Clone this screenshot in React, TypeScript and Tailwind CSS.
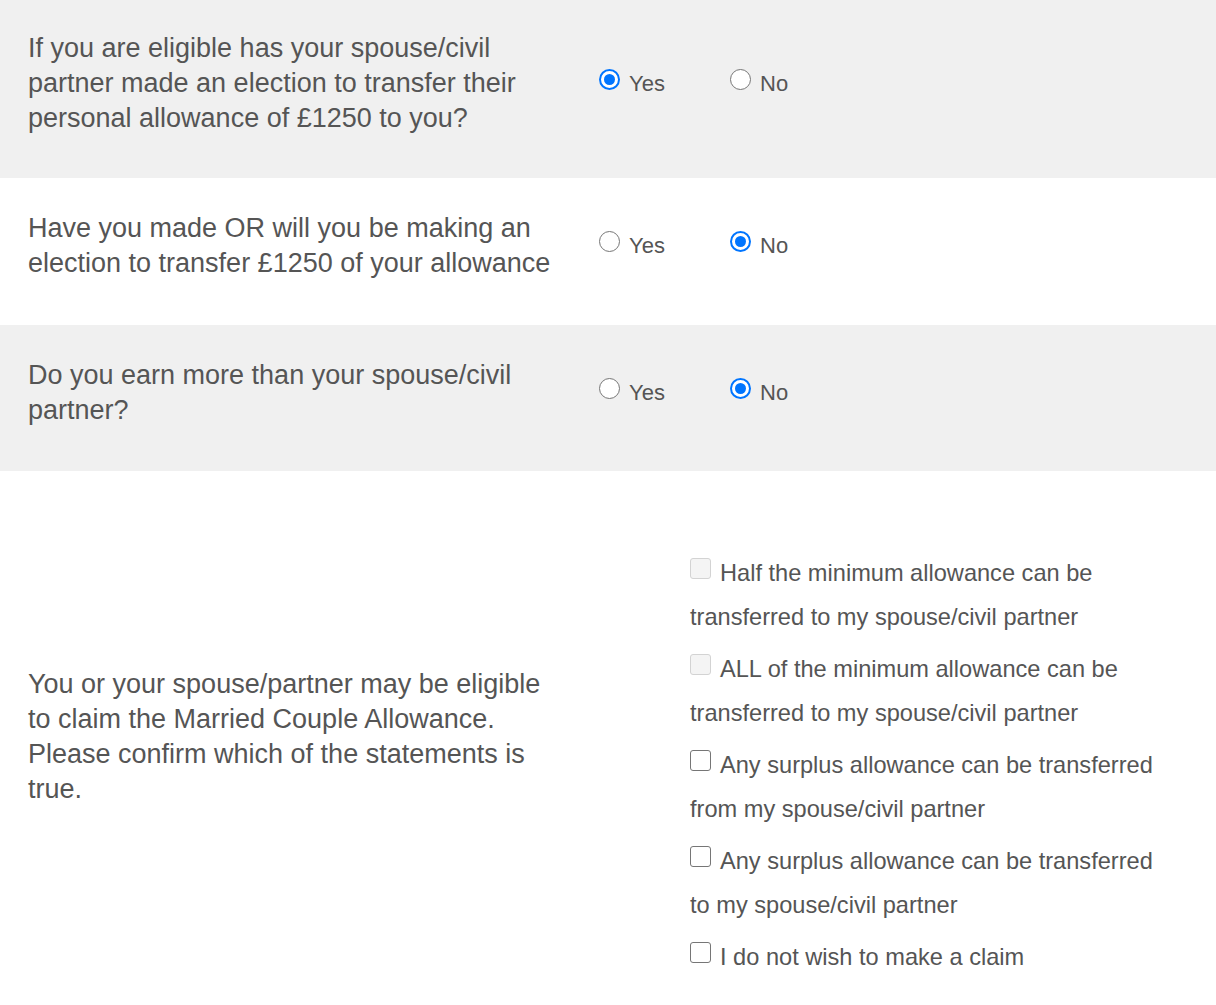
import React from "react";

type Question = {
  text: string;
  answer: "yes" | "no";
  bg: string;
  height: string;
};

const QUESTIONS: Question[] = [
  {
    text: "If you are eligible has your spouse/civil partner made an election to transfer their personal allowance of £1250 to you?",
    answer: "yes",
    bg: "bg-[#f0f0f0]",
    height: "h-[178px]",
  },
  {
    text: "Have you made OR will you be making an election to transfer £1250 of your allowance",
    answer: "no",
    bg: "bg-white",
    height: "h-[147px]",
  },
  {
    text: "Do you earn more than your spouse/civil partner?",
    answer: "no",
    bg: "bg-[#f0f0f0]",
    height: "h-[146px]",
  },
];

const STATEMENTS = [
  { label: "Half the minimum allowance can be transferred to my spouse/civil partner", disabled: true },
  { label: "ALL of the minimum allowance can be transferred to my spouse/civil partner", disabled: true },
  { label: "Any surplus allowance can be transferred from my spouse/civil partner", disabled: false },
  { label: "Any surplus allowance can be transferred to my spouse/civil partner", disabled: false },
  { label: "I do not wish to make a claim", disabled: false },
];

function Radio({ checked, label }: { checked: boolean; label: string }) {
  return (
    <label className="flex items-start gap-[9px] text-[22px] leading-[30px]">
      {checked ? (
        <span className="mt-[0px] flex h-[21px] w-[21px] shrink-0 items-center justify-center rounded-full border-[2.5px] border-[#0075ff] bg-white">
          <span className="h-[11px] w-[11px] rounded-full bg-[#0075ff]" />
        </span>
      ) : (
        <span className="mt-[0px] h-[21px] w-[21px] shrink-0 rounded-full border-[1.5px] border-[#767676] bg-white" />
      )}
      <span>{label}</span>
    </label>
  );
}

export default function App() {
  return (
    <div className="w-[1216px] bg-white text-[#555555] font-['Liberation_Sans',Arial,sans-serif]">
      {/* Yes / No questions */}
      {QUESTIONS.map((q, i) => (
        <div key={i} className={`flex items-center pb-[11px] ${q.bg} ${q.height}`}>
          <div className="w-[599px] shrink-0 pl-[28px] pr-[41px] text-[27px] leading-[35px]">
            {q.text}
          </div>
          <div className="flex items-center">
            <div className="w-[131px]">
              <Radio checked={q.answer === "yes"} label="Yes" />
            </div>
            <Radio checked={q.answer === "no"} label="No" />
          </div>
        </div>
      ))}

      {/* Married Couple Allowance */}
      <div className="flex h-[534px]">
        <div className="w-[690px] shrink-0 pl-[28px] pr-[132px] pt-[196px] text-[27px] leading-[35px]">
          You or your spouse/partner may be eligible to claim the Married Couple Allowance. Please confirm which of the statements is true.
        </div>
        <div className="flex w-[472px] flex-col gap-[8px] pt-[80px] text-[23.6px] leading-[44px]">
          {STATEMENTS.map((s, i) => (
            <label key={i} className="block">
              <span
                className={`mr-[9px] mt-[7px] inline-block h-[21px] w-[21px] rounded-[3px] align-top ${
                  s.disabled
                    ? "border border-[#d3d3d3] bg-[#f4f4f4]"
                    : "border-[1.5px] border-[#767676] bg-white"
                }`}
              />
              {s.label}
            </label>
          ))}
        </div>
      </div>
    </div>
  );
}
